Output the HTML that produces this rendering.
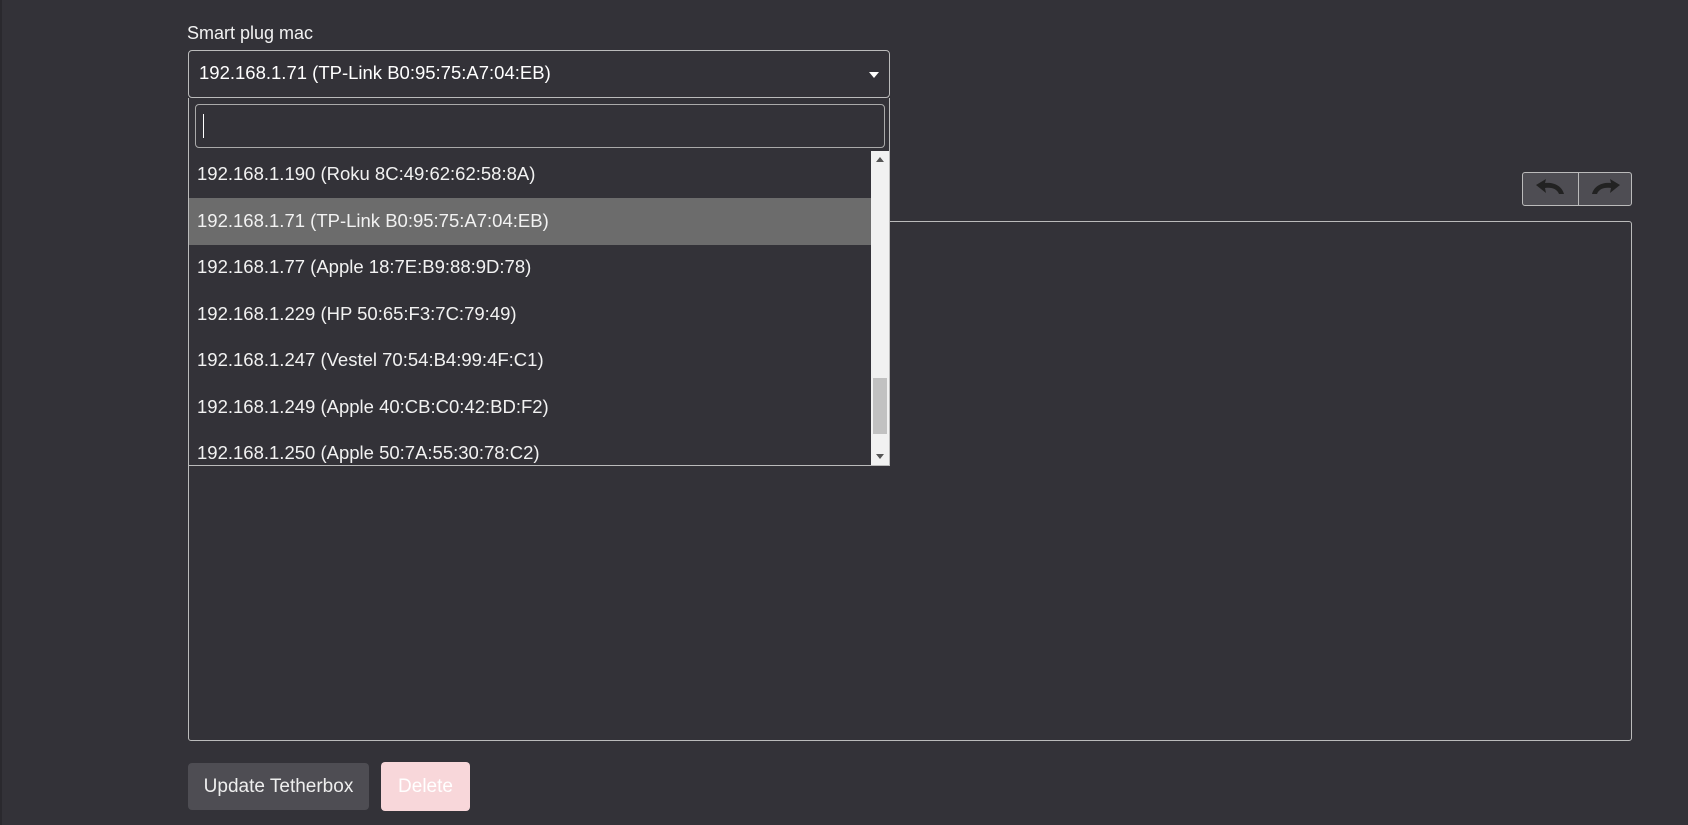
<!DOCTYPE html>
<html><head><style>
body{margin:0;width:1688px;height:825px;background:#333238;font-family:"Liberation Sans",sans-serif;color:#fff;position:relative;overflow:hidden}
.a{position:absolute;box-sizing:border-box}
.lbl{left:187px;top:23px;font-size:18px;color:#f2f2f2}
.sel{left:188px;top:50px;width:702px;height:48px;border:1px solid #bbb;border-radius:4px;font-size:18.5px;padding:11px 10px}
.caret{right:10px;top:21px;width:0;height:0;border-left:5px solid transparent;border-right:5px solid transparent;border-top:6px solid #fff}
.dd{left:188px;top:98px;width:702px;height:368px;border:1px solid #bbb;border-top:none;background:#333238}
.srch{left:6px;top:6px;width:690px;height:44px;border:1px solid #aaa;border-radius:4px}
.cur{left:7px;top:9px;width:1px;height:24px;background:#fff}
.opt{left:0;width:682px;height:47px;font-size:18.5px;padding:12px 8px;color:#f2f2f2}
.sb{left:682px;top:53px;width:18px;height:314px;background:#f1f1f1}
.tb{left:1522px;top:172px;width:110px;height:34px;border:1px solid #bbb;border-radius:3px;background:#4e4d53}
.ta{left:188px;top:221px;width:1444px;height:520px;border:1px solid #bbb;border-radius:3px}
.btn{font-size:19px;border-radius:4px;text-align:center;line-height:47px}
</style></head><body>
<div class="a" style="left:0;top:0;width:2px;height:825px;background:#2a292e"></div>
<div class="a lbl">Smart plug mac</div>
<div class="a ta"></div>
<div class="a tb">
 <div class="a" style="left:55px;top:0;width:1px;height:32px;background:#bbb"></div>
 <svg class="a" style="left:12px;top:5px" width="32" height="22" viewBox="0 0 32 22"><path d="M1 7 L11 1 L10 5 C19 4 27 8 29 16 L24 16 C22 11 17 9 10 10 L11 15 Z" fill="#222"/></svg>
 <svg class="a" style="left:66px;top:5px" width="32" height="22" viewBox="0 0 32 22"><path d="M31 7 L21 1 L22 5 C13 4 5 8 3 16 L8 16 C10 11 15 9 22 10 L21 15 Z" fill="#222"/></svg>
</div>
<div class="a sel">192.168.1.71 (TP-Link B0:95:75:A7:04:EB)<div class="a caret"></div></div>
<div class="a dd">
 <div class="a srch"><div class="a cur"></div></div>
 <div class="a opt" style="top:53px">192.168.1.190 (Roku 8C:49:62:62:58:8A)</div>
 <div class="a opt" style="top:100px;background:#6c6c6c">192.168.1.71 (TP-Link B0:95:75:A7:04:EB)</div>
 <div class="a opt" style="top:146px">192.168.1.77 (Apple 18:7E:B9:88:9D:78)</div>
 <div class="a opt" style="top:193px">192.168.1.229 (HP 50:65:F3:7C:79:49)</div>
 <div class="a opt" style="top:239px">192.168.1.247 (Vestel 70:54:B4:99:4F:C1)</div>
 <div class="a opt" style="top:286px">192.168.1.249 (Apple 40:CB:C0:42:BD:F2)</div>
 <div class="a opt" style="top:332px;height:35px;overflow:hidden">192.168.1.250 (Apple 50:7A:55:30:78:C2)</div>
 <div class="a sb">
  <div class="a" style="left:5px;top:6px;border-left:4px solid transparent;border-right:4px solid transparent;border-bottom:5px solid #555"></div>
  <div class="a" style="left:2px;top:227px;width:14px;height:56px;background:#c1c1c1"></div>
  <div class="a" style="left:5px;bottom:6px;border-left:4px solid transparent;border-right:4px solid transparent;border-top:5px solid #555"></div>
 </div>
</div>
<div class="a btn" style="left:188px;top:763px;width:181px;height:47px;background:#4e4d53;color:#eee">Update Tetherbox</div>
<div class="a btn" style="left:381px;top:762px;width:89px;height:49px;background:#f8d7da;color:#fff;line-height:49px">Delete</div>
</body></html>
